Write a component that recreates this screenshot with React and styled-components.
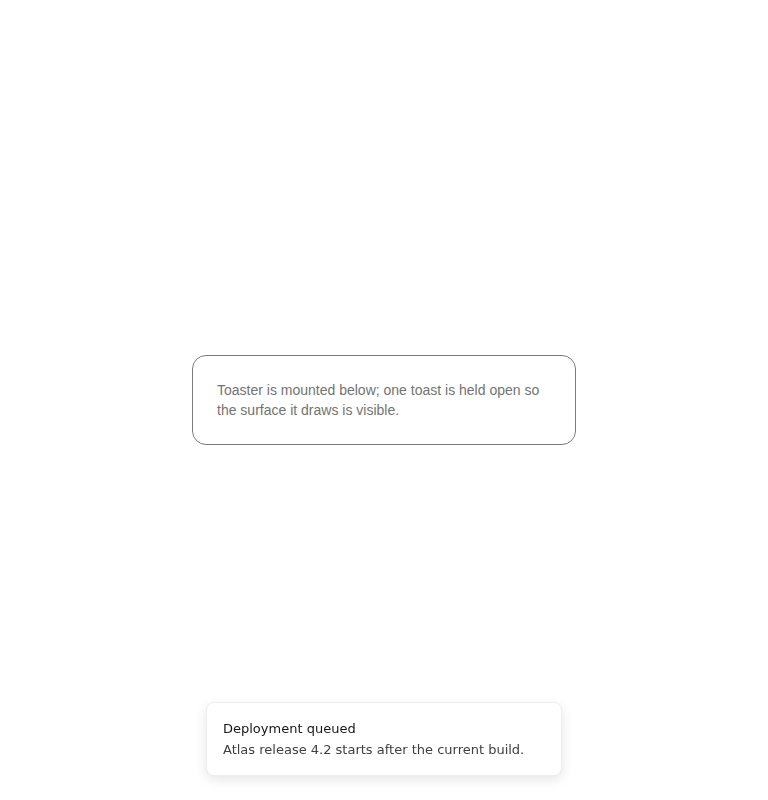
import React from "react";
import styled, { createGlobalStyle } from "styled-components";

const Global = createGlobalStyle`
  html, body { margin: 0; padding: 0; background: #fff; }
  * { box-sizing: border-box; }
`;

const Page = styled.main`
  min-height: 100vh;
  display: flex;
  align-items: center;
  justify-content: center;
`;

const Note = styled.section`
  width: 384px;
  padding: 24px;
  border: 1px solid #7a7a7a;
  border-radius: 14px;
  font-family: "Liberation Sans", Arial, sans-serif;
  font-size: 14px;
  line-height: 20px;
  color: #737373;
`;

const Toaster = styled.ol`
  position: fixed;
  left: 50%;
  bottom: 24px;
  transform: translateX(-50%);
  width: 356px;
  margin: 0;
  padding: 0;
  list-style: none;
`;

const Toast = styled.li`
  display: flex;
  flex-direction: column;
  gap: 2px;
  padding: 16px;
  background: #fff;
  border: 1px solid #ededed;
  border-radius: 8px;
  box-shadow: 0 4px 12px rgba(0, 0, 0, 0.1);
  font-family: "DejaVu Sans", sans-serif;
  font-size: 13px;
`;

const Title = styled.div`
  line-height: 1.5;
  color: #171717;
`;

const Description = styled.div`
  line-height: 1.4;
  color: #3f3f3f;
`;

export default function App() {
  return (
    <>
      <Global />
      <Page>
        <Note>
          Toaster is mounted below; one toast is held open so the surface it draws is visible.
        </Note>
      </Page>
      <Toaster>
        <Toast>
          <Title>Deployment queued</Title>
          <Description>Atlas release 4.2 starts after the current build.</Description>
        </Toast>
      </Toaster>
    </>
  );
}
